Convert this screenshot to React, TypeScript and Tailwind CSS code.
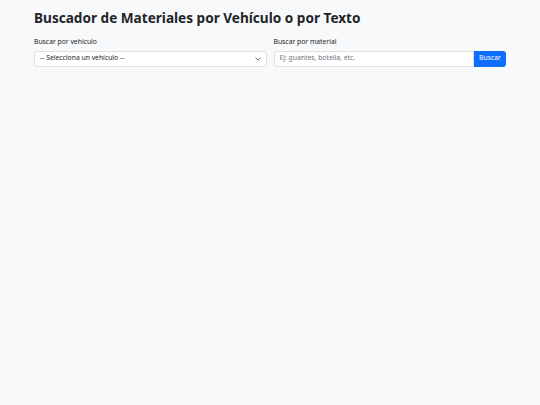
import React from "react";

export default function App() {
  return (
    <div className="min-h-[405px] w-full bg-[#f8f9fa] text-[#212529]" style={{ fontFamily: '"Noto Sans", sans-serif' }}>
      <div className="px-[34px] pt-[10px]">
        <h1 className="text-[13.6px] font-bold leading-[16.3px] m-0">Buscador de Materiales por Vehículo o por Texto</h1>
        <div className="mt-[11px] grid grid-cols-2 gap-[7px]">
          <div>
            <label className="block text-[6.8px] leading-[10.2px] mb-[3.4px]">Buscar por vehículo</label>
            <div className="relative h-[16px] rounded-[3px] border border-[#dee2e6] bg-white flex items-center px-[5px]">
              <span className="text-[6.8px] leading-none">-- Selecciona un vehículo --</span>
              <svg className="absolute right-[5px] top-[5px]" width="6" height="4" viewBox="0 0 16 10" fill="none" stroke="#343a40" strokeWidth="2.2" strokeLinecap="round" strokeLinejoin="round">
                <path d="M2 2l6 6 6-6" />
              </svg>
            </div>
          </div>
          <div>
            <label className="block text-[6.8px] leading-[10.2px] mb-[3.4px]">Buscar por material</label>
            <div className="flex h-[16px]">
              <div className="flex-1 rounded-l-[3px] border border-[#dee2e6] bg-white flex items-center px-[5px]">
                <span className="text-[6.8px] leading-none text-[#6c757d]">Ej: guantes, botella, etc.</span>
              </div>
              <button className="w-[32px] rounded-r-[3px] bg-[#0d6efd] text-white text-[6.8px] leading-none">Buscar</button>
            </div>
          </div>
        </div>
      </div>
    </div>
  );
}
